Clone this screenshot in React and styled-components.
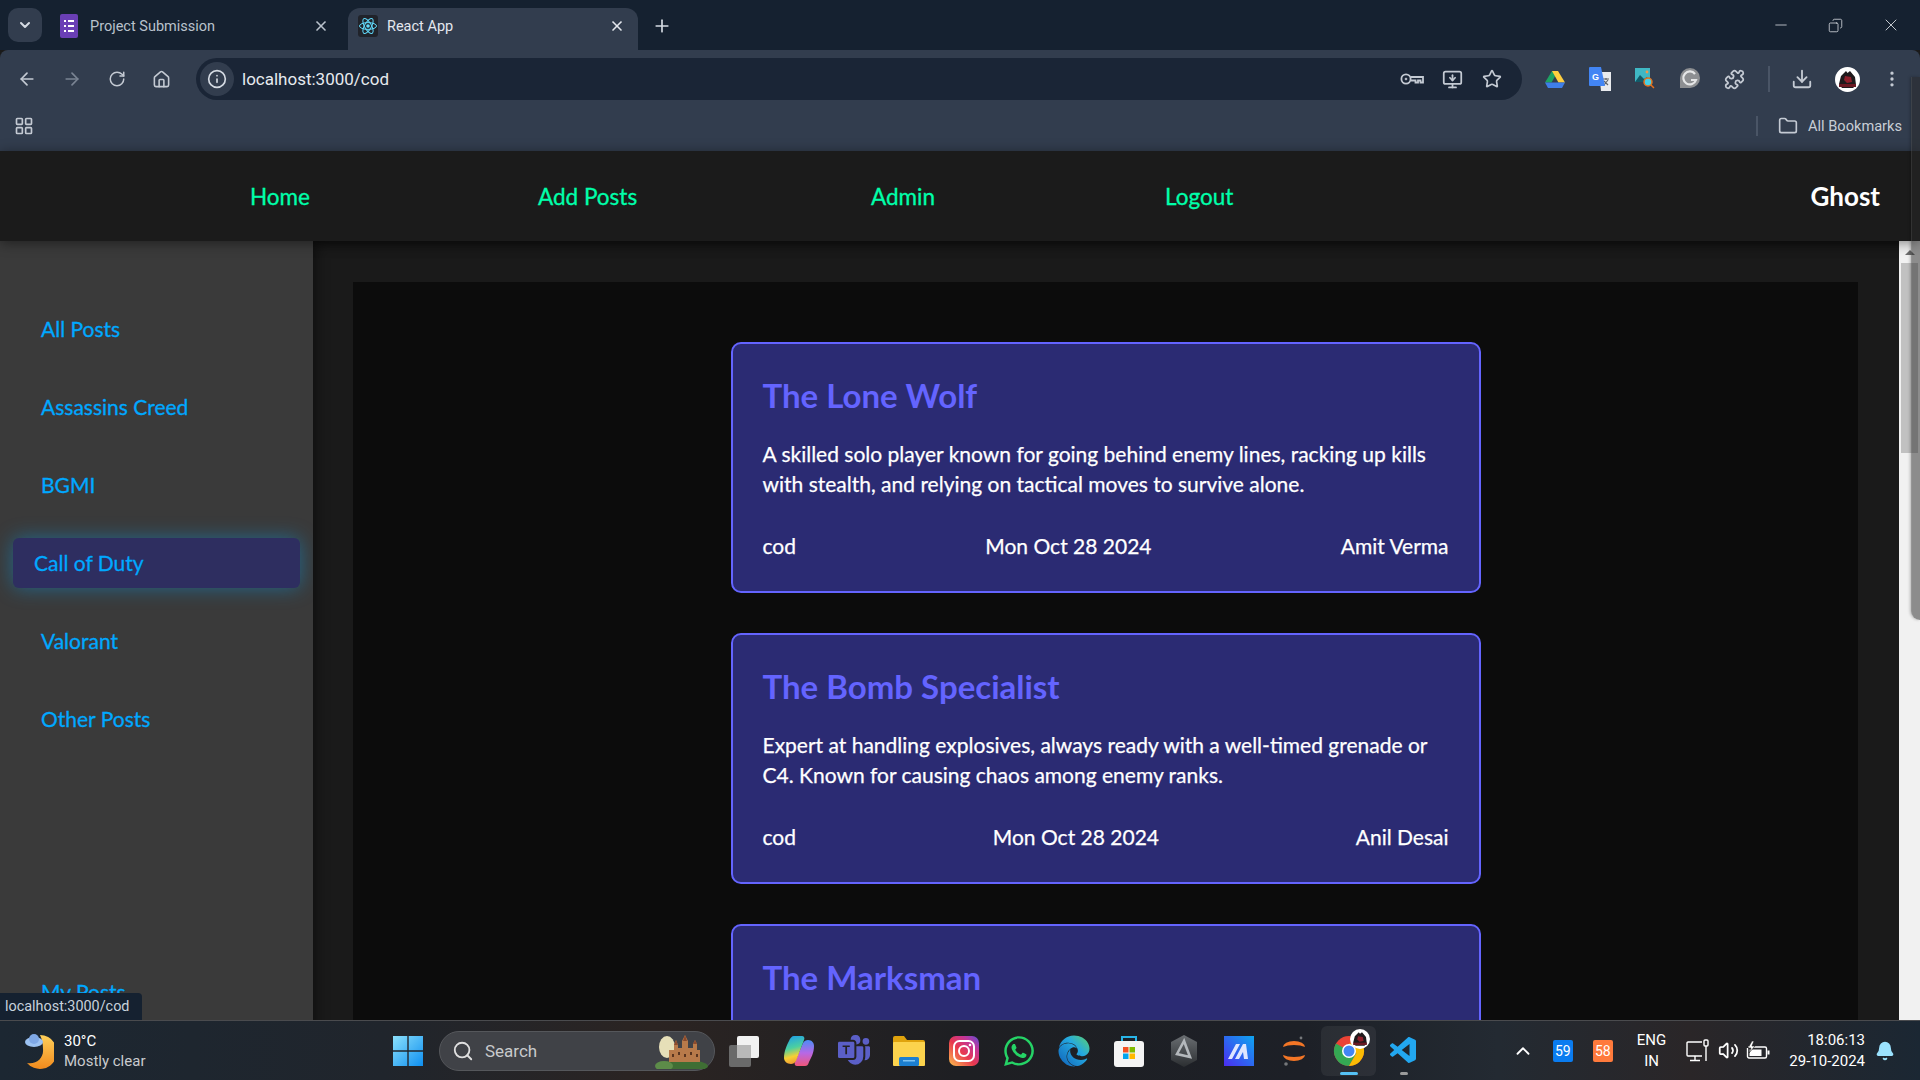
import React from "react";
import styled, { createGlobalStyle } from "styled-components";
import {
  ArrowLeft, ArrowRight, RotateCw, House, Info, MonitorDown, Star, Puzzle, Download,
  EllipsisVertical, Folder, LayoutGrid, Minus, X, Plus, ChevronDown, ChevronUp, Search, Bell,
  Volume2, Copy,
} from "lucide-react";
import { FaWhatsapp, FaEdge } from "react-icons/fa";
import { BsMicrosoftTeams } from "react-icons/bs";
import { VscVscode } from "react-icons/vsc";

const COMIC = `"Comic Sans MS", "Lato", sans-serif`;
const UI = `"Roboto", "Noto Sans", sans-serif`;

const GlobalStyle = createGlobalStyle`
  html, body { margin: 0; padding: 0; height: 100%; overflow: hidden; background: #1a1a1a; }
  * { box-sizing: border-box; }
`;

const Screen = styled.div`
  position: relative;
  width: 1920px;
  height: 1080px;
  display: flex;
  flex-direction: column;
  overflow: hidden;
  font-family: ${UI};
`;

/* browser chrome */
const TabStrip = styled.div`
  height: 50px;
  background: #152130;
  display: flex;
  align-items: flex-end;
  padding-left: 8px;
  color: #d5dbe3;
`;

const TabMenu = styled.div`
  width: 34px;
  height: 34px;
  margin-bottom: 8px;
  border-radius: 10px;
  background: #323d4e;
  display: flex;
  align-items: center;
  justify-content: center;
  margin-right: 6px;
`;

const Tab = styled.div`
  width: ${(p) => p.$w}px;
  height: 42px;
  padding: 0 13px 6px ${(p) => (p.$active ? 10 : 12)}px;
  border-radius: 12px 12px 0 0;
  background: ${(p) => (p.$active ? "#323d4e" : "transparent")};
  margin-right: ${(p) => p.$mr || 0}px;
  display: flex;
  align-items: center;
  gap: ${(p) => (p.$active ? 9 : 12)}px;
  font-size: 14.5px;
  color: ${(p) => (p.$active ? "#e4e8ee" : "#b9c2cc")};
`;

const TabTitle = styled.span`
  flex: 1;
`;

const NewTab = styled.div`
  width: 48px;
  height: 42px;
  padding-bottom: 6px;
  display: flex;
  align-items: center;
  justify-content: center;
`;

const WindowControls = styled.div`
  margin-left: auto;
  height: 50px;
  display: flex;
  align-items: center;
  padding-right: 2px;
`;

const WinBtn = styled.div`
  width: 55px;
  display: flex;
  justify-content: center;
  color: #e6e9ed;
`;

const Toolbar = styled.div`
  height: 50px;
  background: #323d4e;
  border-radius: 8px 8px 0 0;
  display: flex;
  align-items: center;
  padding: 8px 0 0 4px;
`;

const ToolBtn = styled.div`
  width: ${(p) => p.$w || 45}px;
  display: flex;
  justify-content: center;
  align-items: center;
  color: ${(p) => (p.$dim ? "#7a8493" : "#c4cad3")};
`;

const UrlPill = styled.div`
  width: 1326px;
  height: 42px;
  margin: 0 10px 0 12px;
  border-radius: 21px;
  background: #1a2536;
  display: flex;
  align-items: center;
  padding-left: 4px;
`;

const SiteInfo = styled.div`
  width: 34px;
  height: 34px;
  border-radius: 50%;
  background: #323d4e;
  display: flex;
  align-items: center;
  justify-content: center;
  color: #d5dbe3;
  margin-right: 8px;
`;

const UrlText = styled.span`
  flex: 1;
  font-size: 17px;
  color: #e6eaef;
`;

const UrlIcon = styled.div`
  width: 40px;
  display: flex;
  justify-content: center;
  color: #c4cad3;
`;

const ToolSep = styled.div`
  width: 2px;
  height: 26px;
  background: #4a5566;
  margin: 0 14px 0 11px;
`;

const BookmarkBar = styled.div`
  height: 51px;
  background: #323d4e;
  display: flex;
  align-items: center;
  padding: 0 18px 0 14px;
  color: #c4cad3;
`;

const BookmarkSep = styled.div`
  width: 2px;
  height: 20px;
  background: #4a5566;
  margin-left: auto;
  margin-right: 20px;
`;

const BookmarkLabel = styled.span`
  margin-left: 10px;
  font-size: 14.6px;
  color: #c8ced6;
`;

/* translucent edge of a side panel that lies over the window */
const EdgeOverlay = styled.div`
  position: absolute;
  left: 1911px;
  top: 77px;
  width: 9px;
  height: 543px;
  background: rgba(40, 40, 40, 0.5);
  border-left: 1px solid rgba(255, 255, 255, 0.08);
  border-bottom-left-radius: 10px;
  box-shadow: -1px 0 3px rgba(0, 0, 0, 0.25);
  z-index: 6;
`;

/* app */
const Navbar = styled.nav`
  position: relative;
  z-index: 2;
  height: 90px;
  flex: none;
  background: #1b1b1b;
  display: flex;
  align-items: center;
  padding: 0 40px 0 250px;
  gap: 231px;
  font-family: ${COMIC};
  box-shadow: 0 2px 12px rgba(0, 0, 0, 0.45);
`;

const NavLink = styled.a`
  font-size: 22.5px;
  color: #00ffaa;
  -webkit-text-stroke: 0.3px currentColor;
  width: ${(p) => p.$w}px;
  white-space: nowrap;
`;

const Brand = styled.div`
  margin-left: auto;
  font-size: 26px;
  font-weight: 700;
  color: #fff;
`;

const Body = styled.div`
  flex: 1;
  min-height: 0;
  display: flex;
`;

const Sidebar = styled.aside`
  width: 313px;
  flex: none;
  background: #3a3a3a;
  display: flex;
  flex-direction: column;
  padding: 63px 13px 3px;
  gap: 28px;
  font-family: ${COMIC};
`;

const SideItem = styled.a`
  height: 50px;
  flex: none;
  display: flex;
  align-items: center;
  border-radius: 6px;
  font-size: 21px;
  color: #00a8ff;
  -webkit-text-stroke: 0.3px currentColor;
  padding: 0 0 2px ${(p) => (p.$active ? 21 : 28)}px;
  background: ${(p) => (p.$active ? "#2e2e60" : "transparent")};
  box-shadow: ${(p) => (p.$active ? "0 0 20px 0 rgba(0, 168, 255, 0.42)" : "none")};
  margin-top: ${(p) => (p.$bottom ? "auto" : 0)};
`;

const Main = styled.main`
  flex: 1;
  min-width: 0;
  background: #1a1a1a;
  padding: 41px 41px 0 40px;
  box-shadow: inset 10px 10px 14px -8px rgba(0, 0, 0, 0.5);
  overflow: hidden;
`;

const PostList = styled.div`
  background: #0c0c0c;
  height: 100%;
  display: flex;
  flex-direction: column;
  align-items: center;
  padding-top: 60px;
  gap: 40px;
  font-family: ${COMIC};
`;

const Card = styled.article`
  width: 750px;
  height: 251px;
  flex: none;
  background: #2b2b73;
  border: 2px solid #6464ff;
  border-radius: 10px;
  padding: 29px 30px;
`;

const CardTitle = styled.h2`
  margin: 0 0 22px;
  font-size: 33px;
  line-height: 44px;
  font-weight: 700;
  color: #6464ff;
`;

const CardText = styled.p`
  margin: 0 0 33px;
  font-size: 21px;
  line-height: 30px;
  color: #fff;
  -webkit-text-stroke: 0.25px currentColor;
`;

const CardMeta = styled.div`
  display: flex;
  justify-content: space-between;
  font-size: 21px;
  line-height: 28px;
  color: #fff;
  -webkit-text-stroke: 0.25px currentColor;
`;

const ScrollTrack = styled.div`
  width: 21px;
  flex: none;
  background: #f1f1f1;
  display: flex;
  flex-direction: column;
  align-items: center;
`;

const ScrollArrow = styled.div`
  width: 0;
  height: 0;
  margin: 9px 0 8px;
  border-left: 5px solid transparent;
  border-right: 5px solid transparent;
  border-bottom: 5px solid #6e6e6e;
`;

const ScrollThumb = styled.div`
  width: 17px;
  height: 190px;
  background: #c1c1c1;
`;

const StatusBubble = styled.div`
  position: absolute;
  left: 0;
  bottom: 60px;
  width: 142px;
  height: 27px;
  background: #152130;
  border-top-right-radius: 4px;
  display: flex;
  align-items: center;
  padding-left: 5px;
  font-size: 14.4px;
  color: #c8d2dc;
  z-index: 5;
`;

/* windows taskbar */
const Taskbar = styled.footer`
  height: 60px;
  flex: none;
  border-top: 1px solid #4a4b4e;
  background: linear-gradient(90deg, #1c2732, #20252c 20%, #2b2422 34%, #1e1f23 50%, #1d2027 68%, #232a32 78%, #2a2628 88%, #1b2733);
  display: flex;
  align-items: center;
  position: relative;
  color: #fff;
`;

const Weather = styled.div`
  width: 380px;
  flex: none;
  padding-left: 24px;
  display: flex;
  align-items: center;
  gap: 10px;
`;

const WeatherText = styled.div`
  font-size: 15px;
  line-height: 20px;
  color: #fff;
  & span { display: block; color: #c9cbce; }
`;

const Slot = styled.div`
  position: relative;
  width: 55px;
  height: 50px;
  flex: none;
  display: flex;
  align-items: center;
  justify-content: center;
  border-radius: 6px;
  background: ${(p) => (p.$active ? "rgba(255,255,255,0.06)" : "transparent")};
`;

const RunDot = styled.div`
  position: absolute;
  bottom: 1px;
  left: 50%;
  transform: translateX(-50%);
  width: ${(p) => (p.$wide ? 18 : 8)}px;
  height: 3px;
  border-radius: 2px;
  background: ${(p) => (p.$wide ? "#55c1f5" : "#9b9b9b")};
`;

const ProfileBadge = styled.div`
  position: absolute;
  top: 3px;
  right: 6px;
  display: flex;
`;

const SearchBox = styled.div`
  width: 276px;
  height: 40px;
  flex: none;
  margin: 0 1px 0 4px;
  border-radius: 20px;
  background: #404247;
  border: 1px solid #55575b;
  display: flex;
  align-items: center;
  padding: 0 6px 0 12px;
  gap: 11px;
  font-size: 17px;
  color: #c8cacc;
`;

const SearchWord = styled.span`
  flex: 1;
`;

const Tray = styled.div`
  position: absolute;
  right: 0;
  top: 0;
  height: 59px;
  display: flex;
  align-items: center;
  padding-right: 25px;
`;

const TrayBadge = styled.div`
  width: 20px;
  height: 22px;
  border-radius: 2px;
  background: ${(p) => p.$bg};
  margin-left: ${(p) => p.$ml}px;
  font-size: 14px;
  display: flex;
  align-items: center;
  justify-content: center;
  color: #fff;
`;

const Lang = styled.div`
  margin: 0 17px 0 24px;
  font-size: 15px;
  line-height: 21px;
  text-align: center;
`;

const TrayIcon = styled.div`
  width: 30px;
  display: flex;
  justify-content: center;
`;

const Clock = styled.div`
  margin-left: 16px;
  font-size: 15px;
  line-height: 21px;
  text-align: right;
`;

const TrayBell = styled.div`
  margin-left: 10px;
  color: #9be3ff;
  display: flex;
`;

const FormsIcon = () => (
  <svg width="18" height="24" viewBox="0 0 18 24">
    <rect width="18" height="24" rx="2" fill="#6a3fb5" />
    <path d="M4 7h2M8 7h6M4 12h2M8 12h6M4 17h2M8 17h6" stroke="#fff" strokeWidth="2" />
  </svg>
);

const ReactIcon = () => (
  <svg width="20" height="22" viewBox="0 0 20 22">
    <rect width="20" height="22" rx="3" fill="#20232a" />
    <g fill="none" stroke="#61dafb" strokeWidth="1">
      <ellipse cx="10" cy="11" rx="8.5" ry="3.4" />
      <ellipse cx="10" cy="11" rx="8.5" ry="3.4" transform="rotate(60 10 11)" />
      <ellipse cx="10" cy="11" rx="8.5" ry="3.4" transform="rotate(120 10 11)" />
    </g>
    <circle cx="10" cy="11" r="1.8" fill="#61dafb" />
  </svg>
);

const KeyIcon = () => (
  <svg width="24" height="16" viewBox="0 0 24 16" fill="none" stroke="currentColor" strokeWidth="1.8">
    <circle cx="6" cy="8" r="4.6" />
    <circle cx="6" cy="8" r="1" fill="currentColor" strokeWidth="0.6" />
    <path d="M10.5 6h12.5v5.5h-2.5V9.5h-2.5v2h-2.5V9.5h-4.5" />
  </svg>
);

const DriveIcon = () => (
  <svg width="20" height="19" viewBox="0 0 20 19">
    <path d="M7 0h6L6.5 11.5H0z" fill="#1ea362" transform="translate(0 1)" />
    <path d="M7 1h6l7 11.5h-6.5z" fill="#ffcf3f" />
    <path d="M0 12.5h20L17 18H3z" fill="#3f7ee8" />
  </svg>
);

const TranslateIcon = () => (
  <svg width="22" height="24" viewBox="0 0 22 24">
    <path d="M10 5h12v19H12z" fill="#e8eaed" />
    <path d="M14 12h6M17 11v2M15 18l4-5M15 14l4 4" stroke="#5f6368" strokeWidth="1.2" fill="none" />
    <path d="M1 0h11l4 19H1a1 1 0 0 1-1-1V1a1 1 0 0 1 1-1z" fill="#4285f4" />
    <text x="3" y="13" fontSize="9" fontWeight="700" fill="#fff" fontFamily="Liberation Sans, sans-serif">G</text>
  </svg>
);

const ImageSearchIcon = () => (
  <svg width="20" height="24" viewBox="0 0 20 24">
    <rect y="1" width="15" height="14" fill="#3fb8c4" />
    <path d="M0 15l5-7 4 4 3-2 3 5z" fill="#135a68" />
    <circle cx="12" cy="5" r="1.4" fill="#f2994a" />
    <circle cx="13" cy="15" r="4" fill="#47d1e6" stroke="#e8711a" strokeWidth="1.5" />
    <path d="M16 18l3 3" stroke="#e8711a" strokeWidth="1.5" />
  </svg>
);

const GrammarIcon = () => (
  <svg width="22" height="24" viewBox="0 0 22 24">
    <path d="M11 1a10 10 0 1 1 0 20H1V11A10 10 0 0 1 11 1z" fill="#8d8f92" />
    <path d="M16 7a6.5 6.5 0 1 0 1 6h-5" fill="none" stroke="#e5e6e7" strokeWidth="2.2" />
  </svg>
);

const AvatarIcon = ({ size = 25 }) => (
  <svg width={size} height={size} viewBox="0 0 25 25">
    <circle cx="12.5" cy="12.5" r="12.5" fill="#fff" />
    <path d="M4 17l2-8 5-5 1.5 2L15 4l5 6 1 8-3 3H7z" fill="#1f1a1c" />
    <path d="M10 9l6 1 1 5-5 1-3-3z" fill="#8f1f2b" />
    <rect x="4" y="17" width="17" height="3" fill="#6a1822" />
  </svg>
);

const MoonCloudIcon = () => (
  <svg width="30" height="38" viewBox="0 0 30 38">
    <defs>
      <linearGradient id="moonFill" x1="0" y1="0" x2="0" y2="1">
        <stop offset="0" stopColor="#ffd05a" />
        <stop offset="1" stopColor="#f08a1d" />
      </linearGradient>
    </defs>
    <path d="M16 3a17 17 0 1 1-13 28c9 2 17-5 16-14 0-5-1-10-3-14z" fill="url(#moonFill)" />
    <ellipse cx="10" cy="10" rx="9" ry="5" fill="#9cc2f2" />
    <circle cx="10" cy="7" r="5" fill="#7fa8e6" />
  </svg>
);

const WinLogo = () => (
  <svg width="30" height="30" viewBox="0 0 30 30">
    <defs>
      <linearGradient id="winFill" x1="0" y1="0" x2="1" y2="1">
        <stop offset="0" stopColor="#8be0fb" />
        <stop offset="1" stopColor="#0e8ff0" />
      </linearGradient>
    </defs>
    <path d="M0 0h14.3v14.3H0zM15.7 0H30v14.3H15.7zM0 15.7h14.3V30H0zM15.7 15.7H30V30H15.7z" fill="url(#winFill)" />
  </svg>
);

const CastleIcon = () => (
  <svg width="54" height="36" viewBox="0 0 54 36">
    <ellipse cx="13" cy="14" rx="8" ry="11" fill="#e6dfb8" />
    <ellipse cx="30" cy="33" rx="24" ry="6" fill="#3f6e34" />
    <ellipse cx="10" cy="33" rx="9" ry="5" fill="#5d8c49" />
    <path d="M15 29V17h5v-5l2-5 2 5v3h4V8l3-6 3 6v7h5v-4l2-4 2 4v6h3v12z" fill="#b87a4a" />
    <path d="M29 8l2-6 2 6zM20 12l2-5 2 5zM39 11l2-4 2 4z" fill="#8c4a2c" />
    <path d="M18 21h2v3h-2zM24 19h2v3h-2zM30 21h2v3h-2zM36 19h2v3h-2zM42 21h2v3h-2z" fill="#5a3520" />
  </svg>
);

const TaskViewIcon = () => (
  <svg width="32" height="32" viewBox="0 0 32 32">
    <rect x="1" y="10" width="22" height="22" rx="2" fill="#6a6a6a" />
    <rect x="9" y="1" width="22" height="22" rx="2" fill="#f2f2f2" />
    <rect x="9" y="10" width="14" height="13" fill="#b9b9b9" />
  </svg>
);

const CopilotIcon = () => (
  <svg width="32" height="32" viewBox="0 0 32 32">
    <defs>
      <linearGradient id="copA" x1="0.2" y1="0" x2="0.4" y2="1">
        <stop offset="0" stopColor="#1f9fe8" />
        <stop offset="0.45" stopColor="#4cd0a0" />
        <stop offset="0.75" stopColor="#f7d033" />
        <stop offset="1" stopColor="#f09a33" />
      </linearGradient>
      <linearGradient id="copB" x1="0.6" y1="0" x2="0.6" y2="1">
        <stop offset="0" stopColor="#4a8df5" />
        <stop offset="0.5" stopColor="#b768e6" />
        <stop offset="1" stopColor="#f0567a" />
      </linearGradient>
    </defs>
    <path d="M22 31h-8c-2 0-3-2-2-4l8-19c1-2 3-3 5-3 4 0 6 3 6 6 0 7-3 12-5 16-1 3-2 4-4 4z" fill="url(#copB)" />
    <path d="M11 1h8c2 0 3 2 2 4l-8 21c-1 2-3 3-5 3-4 0-7-3-7-6 0-7 3-13 5-17 1-3 3-5 5-5z" fill="url(#copA)" />
  </svg>
);

const ExplorerIcon = () => (
  <svg width="32" height="30" viewBox="0 0 32 30">
    <path d="M0 2a2 2 0 0 1 2-2h9l3 4h16a2 2 0 0 1 2 2v6H0z" fill="#e0a30d" />
    <rect y="6" width="32" height="24" rx="1" fill="#fcd34d" />
    <rect x="6" y="21" width="20" height="9" rx="1.5" fill="#1c7fd0" />
    <rect x="10" y="24" width="12" height="1.5" fill="#7cc2f2" />
  </svg>
);

const InstaIcon = () => (
  <svg width="30" height="30" viewBox="0 0 30 30">
    <defs>
      <linearGradient id="insta" x1="0" y1="1" x2="1" y2="0">
        <stop offset="0" stopColor="#fdc14d" />
        <stop offset="0.45" stopColor="#e8384f" />
        <stop offset="0.75" stopColor="#c2359a" />
        <stop offset="1" stopColor="#5b51d8" />
      </linearGradient>
    </defs>
    <rect width="30" height="30" rx="7" fill="url(#insta)" />
    <rect x="5" y="5" width="20" height="20" rx="5.5" fill="none" stroke="#fff" strokeWidth="2" />
    <circle cx="15" cy="15" r="5" fill="none" stroke="#fff" strokeWidth="2" />
    <circle cx="21" cy="9" r="1.3" fill="#fff" />
  </svg>
);

const EdgeIcon = () => (
  <>
    <svg width="0" height="0" style={{ position: "absolute" }}>
      <defs>
        <linearGradient id="edgeFill" x1="0" y1="1" x2="1" y2="0">
          <stop offset="0" stopColor="#0f5fb8" />
          <stop offset="0.6" stopColor="#25a9e0" />
          <stop offset="1" stopColor="#5ed26a" />
        </linearGradient>
      </defs>
    </svg>
    <FaEdge size={32} style={{ fill: "url(#edgeFill)" }} />
  </>
);

const StoreIcon = () => (
  <svg width="30" height="32" viewBox="0 0 30 32">
    <path d="M8 6V2h14v4" fill="none" stroke="#28b5e8" strokeWidth="2" />
    <rect y="6" width="30" height="26" rx="3" fill="#f4f4f4" />
    <path d="M9 12h5.5v5.5H9z" fill="#f25022" />
    <path d="M15.5 12H21v5.5h-5.5z" fill="#7fba00" />
    <path d="M9 18.5h5.5V24H9z" fill="#00a4ef" />
    <path d="M15.5 18.5H21V24h-5.5z" fill="#ffb900" />
  </svg>
);

const HexIcon = () => (
  <svg width="28" height="32" viewBox="0 0 28 32">
    <defs>
      <linearGradient id="hexFill" x1="0" y1="0" x2="0" y2="1">
        <stop offset="0" stopColor="#6a6e72" />
        <stop offset="1" stopColor="#2b2e31" />
      </linearGradient>
    </defs>
    <path d="M14 0l13 7v18l-13 7-13-7V7z" fill="url(#hexFill)" />
    <path d="M14 6l-7 13 13 3-3-8z" fill="none" stroke="#b4b8bc" strokeWidth="2.6" />
  </svg>
);

const MarkIcon = () => (
  <svg width="30" height="30" viewBox="0 0 30 30">
    <defs>
      <linearGradient id="markFill" x1="0" y1="1" x2="1" y2="0">
        <stop offset="0" stopColor="#4b2df0" />
        <stop offset="1" stopColor="#0ea5f0" />
      </linearGradient>
    </defs>
    <rect width="30" height="30" fill="url(#markFill)" />
    <path d="M4 23L12 8h4L8 23zM11 23L19 8h3l2 15h-4l-1-7-4 7z" fill="#dfe6ff" />
  </svg>
);

const JupyterIcon = () => (
  <svg width="26" height="32" viewBox="0 0 26 32">
    <path d="M2 12a11 6 0 0 1 22 0 14 5 0 0 0-22 0zM2 20a11 6 0 0 0 22 0 14 5 0 0 1-22 0z" fill="#f37626" />
    <circle cx="20" cy="3" r="1.4" fill="#76787b" />
    <circle cx="5" cy="29" r="1.8" fill="#76787b" />
  </svg>
);

const ChromeIcon = () => (
  <svg width="32" height="32" viewBox="0 0 32 32">
    <circle cx="16" cy="16" r="15" fill="#ea4335" />
    <path d="M16 16L3 8.5A15 15 0 0 0 16 31l7.5-13z" fill="#34a853" />
    <path d="M16 16l7.5 2L16 31a15 15 0 0 0 13-22.5H16z" fill="#fbbc04" />
    <circle cx="16" cy="16" r="7" fill="#fff" />
    <circle cx="16" cy="16" r="5.5" fill="#4285f4" />
  </svg>
);

const NetworkIcon = () => (
  <svg width="24" height="24" viewBox="0 0 24 24" fill="none" stroke="#fff" strokeWidth="1.4">
    <path d="M16 3H2a1 1 0 0 0-1 1v12a1 1 0 0 0 1 1h14" />
    <path d="M9 17v4M4 21.5h10" />
    <rect x="18" y="1" width="4" height="6" rx="1" />
    <path d="M20 7v15" />
  </svg>
);

const BatteryIcon = () => (
  <svg width="24" height="22" viewBox="0 0 24 22">
    <path d="M2 7h17a1.5 1.5 0 0 1 1.5 1.5v8A1.5 1.5 0 0 1 19 18H3a1.5 1.5 0 0 1-1.5-1.5V8" fill="none" stroke="#fff" strokeWidth="1.4" />
    <rect x="3.5" y="9.5" width="12" height="6.5" fill="#fff" />
    <rect x="21.5" y="10.5" width="2" height="4" fill="#fff" />
    <path d="M6 1L2 8h3l-2 5 6-7H6l2-5z" fill="#fff" stroke="#222" strokeWidth="0.6" />
  </svg>
);

const navLinks = [
  { label: "Home", w: 57 },
  { label: "Add Posts", w: 102 },
  { label: "Admin", w: 63 },
  { label: "Logout", w: 69 },
];

const categories = ["All Posts", "Assassins Creed", "BGMI", "Call of Duty", "Valorant", "Other Posts"];

const posts = [
  {
    title: "The Lone Wolf",
    text: "A skilled solo player known for going behind enemy lines, racking up kills with stealth, and relying on tactical moves to survive alone.",
    date: "Mon Oct 28 2024",
    author: "Amit Verma",
  },
  {
    title: "The Bomb Specialist",
    text: "Expert at handling explosives, always ready with a well-timed grenade or C4. Known for causing chaos among enemy ranks.",
    date: "Mon Oct 28 2024",
    author: "Anil Desai",
  },
  {
    title: "The Marksman",
    text: "A sharpshooter who holds the long angles and picks off enemies from afar.",
    date: "Mon Oct 28 2024",
    author: "Rohit Nair",
  },
];

const dockIcons = [
  <TaskViewIcon />,
  <CopilotIcon />,
  <BsMicrosoftTeams size={32} color="#5b5fc7" />,
  <ExplorerIcon />,
  <InstaIcon />,
  <FaWhatsapp size={34} color="#25d366" />,
  <EdgeIcon />,
  <StoreIcon />,
  <HexIcon />,
  <MarkIcon />,
  <JupyterIcon />,
];

export default function App() {
  return (
    <Screen>
      <GlobalStyle />
      <TabStrip>
        <TabMenu><ChevronDown size={16} strokeWidth={3} /></TabMenu>
        <Tab $w={294} $mr={6}>
          <FormsIcon />
          <TabTitle>Project Submission</TabTitle>
          <X size={16} strokeWidth={2.5} />
        </Tab>
        <Tab $w={290} $active>
          <ReactIcon />
          <TabTitle>React App</TabTitle>
          <X size={16} strokeWidth={2.5} />
        </Tab>
        <NewTab><Plus size={20} strokeWidth={2} /></NewTab>
        <WindowControls>
          <WinBtn><Minus size={18} strokeWidth={1} /></WinBtn>
          <WinBtn><Copy size={15} strokeWidth={1.2} style={{ transform: "scaleX(-1)" }} /></WinBtn>
          <WinBtn><X size={20} strokeWidth={1} /></WinBtn>
        </WindowControls>
      </TabStrip>

      <Toolbar>
        <ToolBtn><ArrowLeft size={20} /></ToolBtn>
        <ToolBtn $dim><ArrowRight size={20} /></ToolBtn>
        <ToolBtn><RotateCw size={18} /></ToolBtn>
        <ToolBtn><House size={19} /></ToolBtn>
        <UrlPill>
          <SiteInfo><Info size={20} /></SiteInfo>
          <UrlText>localhost:3000/cod</UrlText>
          <UrlIcon><KeyIcon /></UrlIcon>
          <UrlIcon><MonitorDown size={21} /></UrlIcon>
          <UrlIcon><Star size={20} /></UrlIcon>
          <ToolBtn $w={10} />
        </UrlPill>
        <ToolBtn $w={45}><DriveIcon /></ToolBtn>
        <ToolBtn $w={45}><TranslateIcon /></ToolBtn>
        <ToolBtn $w={45}><ImageSearchIcon /></ToolBtn>
        <ToolBtn $w={45}><GrammarIcon /></ToolBtn>
        <ToolBtn $w={45}><Puzzle size={21} /></ToolBtn>
        <ToolSep />
        <ToolBtn $w={36}><Download size={22} /></ToolBtn>
        <ToolBtn $w={54}><AvatarIcon /></ToolBtn>
        <ToolBtn $w={36}><EllipsisVertical size={20} /></ToolBtn>
      </Toolbar>

      <BookmarkBar>
        <LayoutGrid size={20} />
        <BookmarkSep />
        <Folder size={20} />
        <BookmarkLabel>All Bookmarks</BookmarkLabel>
      </BookmarkBar>

      <Navbar>
        {navLinks.map((link) => (
          <NavLink key={link.label} $w={link.w}>{link.label}</NavLink>
        ))}
        <Brand>Ghost</Brand>
      </Navbar>

      <Body>
        <Sidebar>
          {categories.map((name) => (
            <SideItem key={name} $active={name === "Call of Duty"}>{name}</SideItem>
          ))}
          <SideItem $bottom>My Posts</SideItem>
        </Sidebar>
        <Main>
          <PostList>
            {posts.map((post) => (
              <Card key={post.title}>
                <CardTitle>{post.title}</CardTitle>
                <CardText>{post.text}</CardText>
                <CardMeta>
                  <span>cod</span>
                  <span>{post.date}</span>
                  <span>{post.author}</span>
                </CardMeta>
              </Card>
            ))}
          </PostList>
        </Main>
        <ScrollTrack>
          <ScrollArrow />
          <ScrollThumb />
        </ScrollTrack>
      </Body>

      <EdgeOverlay />
      <StatusBubble>localhost:3000/cod</StatusBubble>

      <Taskbar>
        <Weather>
          <MoonCloudIcon />
          <WeatherText>30°C<span>Mostly clear</span></WeatherText>
        </Weather>
        <Slot><WinLogo /></Slot>
        <SearchBox>
          <Search size={22} color="#e0e0e0" />
          <SearchWord>Search</SearchWord>
          <CastleIcon />
        </SearchBox>
        {dockIcons.map((icon, i) => (
          <Slot key={i}>{icon}</Slot>
        ))}
        <Slot $active>
          <ChromeIcon />
          <ProfileBadge><AvatarIcon size={20} /></ProfileBadge>
          <RunDot $wide />
        </Slot>
        <Slot>
          <VscVscode size={32} color="#22a7f0" />
          <RunDot />
        </Slot>
        <Tray>
          <ChevronUp size={22} />
          <TrayBadge $bg="#0a7cf0" $ml={19}>59</TrayBadge>
          <TrayBadge $bg="#ff7a3c" $ml={20}>58</TrayBadge>
          <Lang>ENG<br />IN</Lang>
          <TrayIcon><NetworkIcon /></TrayIcon>
          <TrayIcon><Volume2 size={21} /></TrayIcon>
          <TrayIcon><BatteryIcon /></TrayIcon>
          <Clock>18:06:13<br />29-10-2024</Clock>
          <TrayBell><Bell size={20} fill="#9be3ff" /></TrayBell>
        </Tray>
      </Taskbar>
    </Screen>
  );
}
